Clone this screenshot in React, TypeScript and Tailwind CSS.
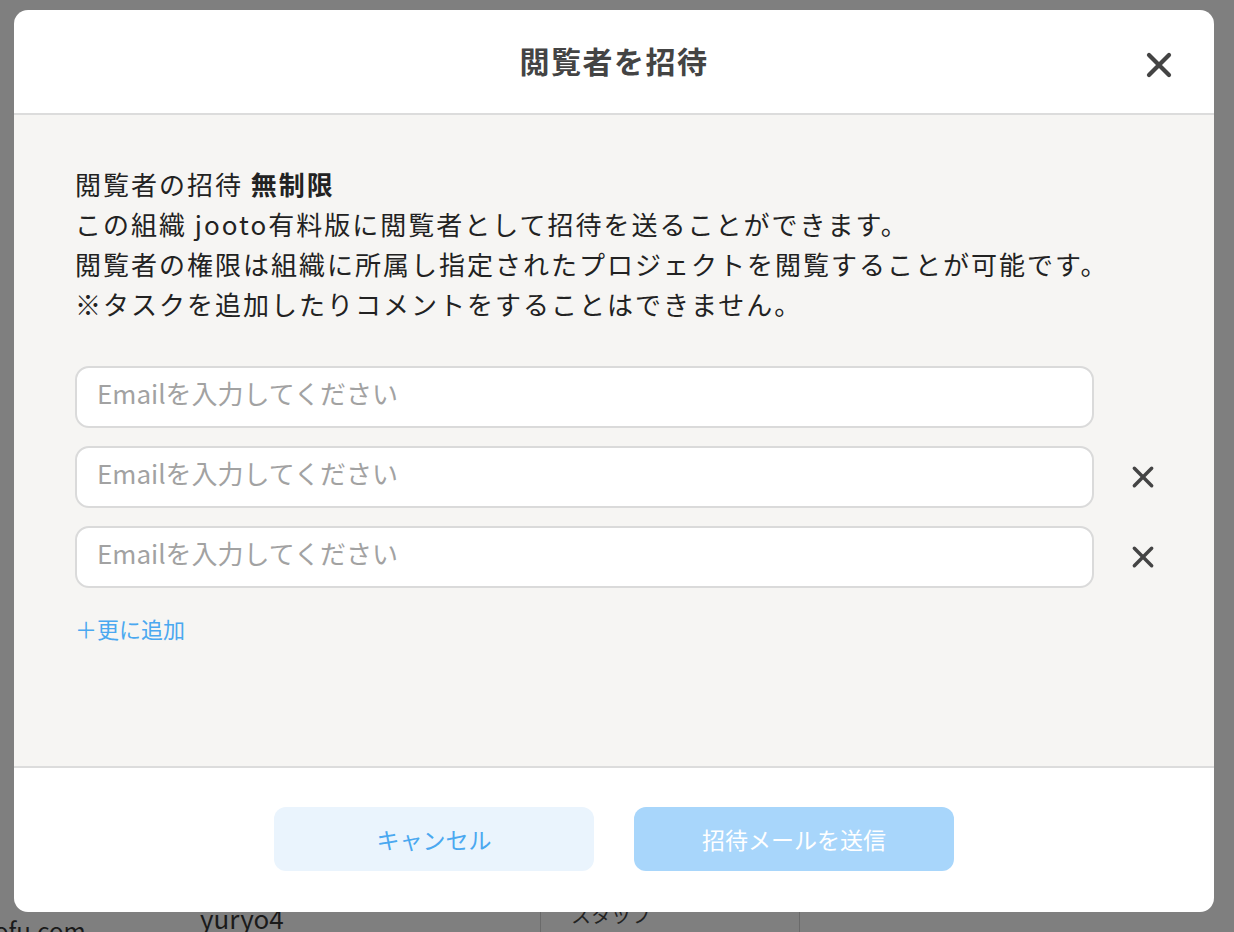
import React from "react";

const XIcon = ({ size, w = 3.2 }: { size: number; w?: number }) => (
  <svg width={size} height={size} viewBox="0 0 24 24" fill="none" stroke="#444" strokeWidth={w} strokeLinecap="round">
    <path d="M4 4L20 20M20 4L4 20" />
  </svg>
);

const font = { fontFamily: '"Noto Sans CJK JP", "Noto Sans", sans-serif' };

export default function App() {
  const rows = [false, true, true];
  return (
    <div className="relative w-[1234px] h-[932px] overflow-hidden bg-[#7f7f7f]" style={font}>
      <div className="absolute left-[200px] top-[898px] text-[26px] text-[#1a1a1a]">yuryo4</div>
      <div className="absolute left-[-6px] top-[912px] text-[24px] text-[#1a1a1a]">ofu.com</div>
      <div className="absolute left-[540px] top-[890px] w-[260px] h-[50px] border-x border-[#6a6a6a] text-[#222] text-[20px] pl-[30px] pt-[10px]">スタッフ</div>
      <div className="absolute left-[14px] top-[10px] w-[1200px] h-[902px] bg-white rounded-[14px] flex flex-col overflow-hidden">
        <div className="h-[105px] shrink-0 border-b-2 border-[#dcdcdc] flex items-center justify-center relative">
          <div className="text-[30px] font-bold text-[#444] tracking-[1.5px] pb-[2px]">閲覧者を招待</div>
          <div className="absolute right-[40px] top-[40px]"><XIcon size={30} w={3.4} /></div>
        </div>
        <div className="flex-1 bg-[#f6f5f3] pl-[61px] pr-[56px] pt-[49px] border-b-2 border-[#dcdcdc]">
          <div className="text-[26px] leading-[40px] text-[#222] tracking-[2px]">
            <div>閲覧者の招待 <span className="font-bold">無制限</span></div>
            <div>この組織 jooto有料版に閲覧者として招待を送ることができます。</div>
            <div>閲覧者の権限は組織に所属し指定されたプロジェクトを閲覧することが可能です。</div>
            <div>※タスクを追加したりコメントをすることはできません。</div>
          </div>
          <div className="mt-[42px] flex flex-col gap-[18px]">
            {rows.map((x, i) => (
              <div key={i} className="flex items-center">
                <div className="w-[1019px] h-[62px] bg-white border-2 border-[#dadada] rounded-[14px] pl-[20px] pb-[10px] flex items-center text-[26px] text-[#a2a2a2]">
                  Emailを入力してください
                </div>
                {x && <div className="ml-[36px]"><XIcon size={26} /></div>}
              </div>
            ))}
          </div>
          <div className="mt-[24px] text-[22px] text-[#4aa8f0]">＋更に追加</div>
        </div>
        <div className="h-[144px] shrink-0 flex items-center justify-center gap-[40px] pb-[2px]">
          <div className="w-[320px] h-[64px] rounded-[12px] bg-[#eaf4fd] text-[#4aa8f0] text-[23px] flex items-center justify-center">キャンセル</div>
          <div className="w-[320px] h-[64px] rounded-[12px] bg-[#a8d6fb] text-white text-[23px] flex items-center justify-center">招待メールを送信</div>
        </div>
      </div>
    </div>
  );
}
